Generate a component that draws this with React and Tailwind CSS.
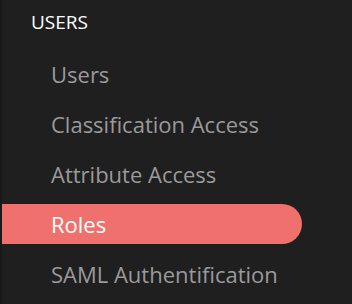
import React from "react";

const items = ["Users", "Classification Access", "Attribute Access", "Roles", "SAML Authentification"];

export default function App() {
  const active = "Roles";
  return (
    <div
      className="w-[352px] h-[304px] flex bg-[#1f1f1f] overflow-hidden"
      style={{ fontFamily: '"Open Sans", sans-serif' }}
    >
      <div className="w-[2px] bg-[#191919]" />
      <div className="flex-1 flex flex-col">
        <div className="h-[44px] flex items-center pl-[29px] text-[19px] text-white">USERS</div>
        <div className="flex flex-col gap-[10px] pt-[10px]">
          {items.map((item) => (
            <div
              key={item}
              className={
                item === active
                  ? "h-[40px] w-[300px] flex items-center pl-[49px] text-[22px] text-white bg-[#ef706d] rounded-r-full"
                  : "h-[40px] w-[300px] flex items-center pl-[49px] text-[22px] text-[#9a9a9a]"
              }
            >
              {item}
            </div>
          ))}
        </div>
      </div>
    </div>
  );
}
